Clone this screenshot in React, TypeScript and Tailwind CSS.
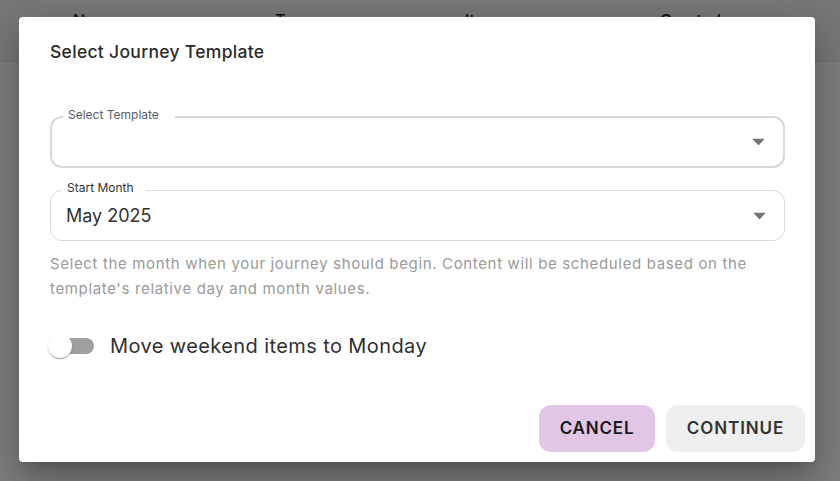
import React from "react";

const Caret = () => (
  <svg width="13" height="7" viewBox="0 0 13 7" className="absolute right-[18px] top-1/2 -translate-y-1/2">
    <path d="M0 0h13L6.5 7z" fill="#757575" />
  </svg>
);

export default function App() {
  return (
    <div
      className="relative w-[840px] h-[481px] overflow-hidden bg-white"
      style={{ fontFamily: "Inter, 'Noto Sans', sans-serif" }}
    >
      {/* background page */}
      <div className="h-[62px] bg-[#f0f0f0] border-b border-[#e6e6e6] flex pl-[73px] pt-[10px] text-[16px] leading-[20px] font-medium text-[#222]">
        <div className="w-[202px]">Name</div>
        <div className="w-[190px]">Type</div>
        <div className="w-[195px]">Items</div>
        <div>Created</div>
      </div>

      {/* overlay */}
      <div className="absolute inset-0 bg-black/50" />

      {/* dialog */}
      <div className="absolute left-[19px] top-[17px] w-[796px] h-[445px] bg-white rounded-[4px] shadow-[0_11px_15px_-7px_rgba(0,0,0,0.2),0_24px_38px_3px_rgba(0,0,0,0.14),0_9px_46px_8px_rgba(0,0,0,0.12)] flex flex-col">
        <div className="pl-[31px] pr-[30px] pt-[23px] text-[17.5px] leading-[24px] tracking-[0.3px] font-medium text-[#2b2b2b]">
          Select Journey Template
        </div>

        <div className="pl-[31px] pr-[30px] mt-[52px] flex flex-col">
          {/* Select Template */}
          <div className="relative h-[52px] rounded-[12px] border-2 border-[#d5d8de]">
            <span className="absolute left-[11px] -top-[10px] bg-white pl-[5px] pr-[16px] text-[12px] leading-[14px] text-[#56606f]">
              Select Template
            </span>
            <Caret />
          </div>

          {/* Start Month */}
          <div className="relative mt-[22px] h-[51px] rounded-[12px] border border-[#d9d9d9] flex items-center pl-[15px]">
            <span className="absolute left-[11px] -top-[10px] bg-white pl-[5px] pr-[12px] text-[12px] leading-[14px] text-[#333]">
              Start Month
            </span>
            <span className="text-[18px] leading-[24px] text-[#333]">May 2025</span>
            <Caret />
          </div>

          <p className="mt-[10px] text-[15px] leading-[25px] tracking-[0.65px] text-[#9a9a9a]">
            Select the month when your journey should begin. Content will be scheduled based on the
            template's relative day and month values.
          </p>

          <div className="mt-[33px] flex items-center h-[24px]">
            <div className="relative w-[46px] h-[24px] flex items-center">
              <div className="absolute left-[10px] w-[34px] h-[16px] rounded-full bg-[#9e9e9e]" />
              <div className="absolute left-[-2px] w-[24px] h-[24px] rounded-full bg-white shadow-[0_2px_1px_-1px_rgba(0,0,0,0.2),0_1px_1px_0_rgba(0,0,0,0.14),0_1px_3px_0_rgba(0,0,0,0.12)]" />
            </div>
            <span className="ml-[14px] text-[20px] leading-[24px] tracking-[0.4px] text-[#2f2f2f]">
              Move weekend items to Monday
            </span>
          </div>
        </div>

        <div className="mt-auto flex justify-end gap-[11px] pr-[10px] pb-[10px]">
          <button className="h-[47px] w-[116px] rounded-[12px] bg-[#e1c6e6] text-[17px] font-semibold tracking-[0.8px] text-[#1a1a1a]">
            CANCEL
          </button>
          <button className="h-[47px] w-[139px] rounded-[12px] bg-[#efefef] text-[17px] font-semibold tracking-[0.9px] text-[#333]">
            CONTINUE
          </button>
        </div>
      </div>
    </div>
  );
}
